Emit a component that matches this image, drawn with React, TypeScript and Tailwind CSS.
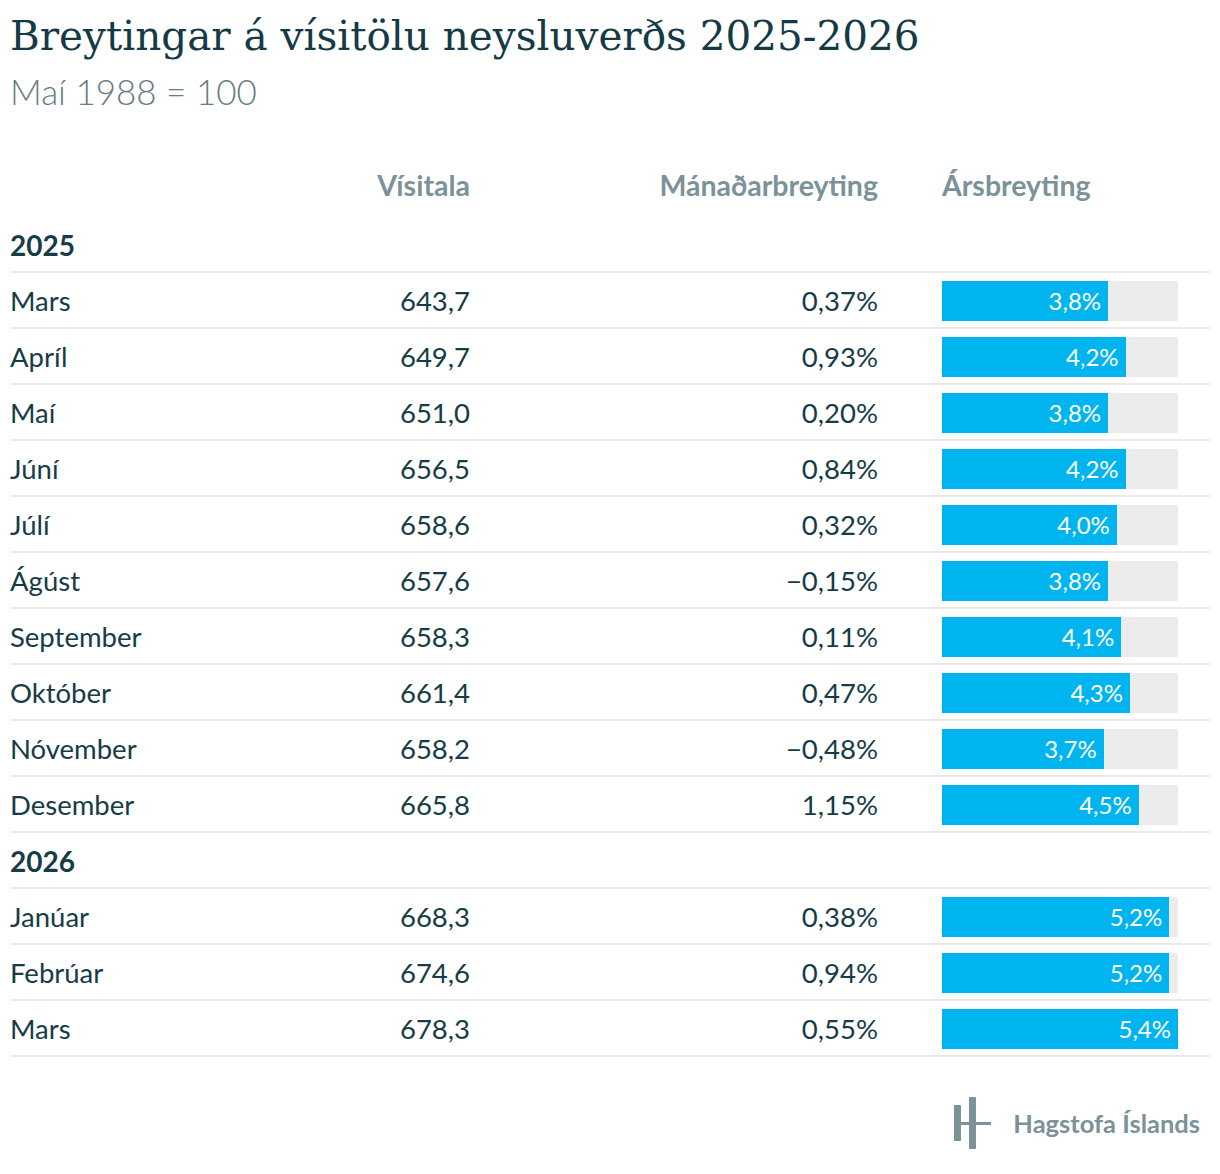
import React from "react";

type Row = { label: string; index: string; month: string; year: number };

const groups: { year: string; rows: Row[] }[] = [
  {
    year: "2025",
    rows: [
      { label: "Mars", index: "643,7", month: "0,37%", year: 3.8 },
      { label: "Apríl", index: "649,7", month: "0,93%", year: 4.2 },
      { label: "Maí", index: "651,0", month: "0,20%", year: 3.8 },
      { label: "Júní", index: "656,5", month: "0,84%", year: 4.2 },
      { label: "Júlí", index: "658,6", month: "0,32%", year: 4.0 },
      { label: "Ágúst", index: "657,6", month: "\u22120,15%", year: 3.8 },
      { label: "September", index: "658,3", month: "0,11%", year: 4.1 },
      { label: "Október", index: "661,4", month: "0,47%", year: 4.3 },
      { label: "Nóvember", index: "658,2", month: "\u22120,48%", year: 3.7 },
      { label: "Desember", index: "665,8", month: "1,15%", year: 4.5 },
    ],
  },
  {
    year: "2026",
    rows: [
      { label: "Janúar", index: "668,3", month: "0,38%", year: 5.2 },
      { label: "Febrúar", index: "674,6", month: "0,94%", year: 5.2 },
      { label: "Mars", index: "678,3", month: "0,55%", year: 5.4 },
    ],
  },
];

const MAX = 5.4;

function fmt(v: number) {
  return v.toFixed(1).replace(".", ",") + "%";
}

function Bar({ value }: { value: number }) {
  return (
    <div className="h-[40px] w-[236px] bg-[#ececec]">
      <div
        className="flex h-full items-center justify-end bg-[#00b5ef] pr-[7px] text-[24px] text-white"
        style={{ width: `${(value / MAX) * 100}%` }}
      >
        {fmt(value)}
      </div>
    </div>
  );
}

function Logo() {
  return (
    <div className="flex items-center gap-[21px]">
      <svg width="38" height="52" viewBox="0 0 38 52">
        <rect x="0" y="8" width="7" height="36" rx="1" fill="#7b9299" />
        <rect x="15" y="0" width="7" height="52" rx="1" fill="#7b9299" />
        <rect x="0" y="25" width="37" height="3" fill="#7b9299" />
      </svg>
      <span className="text-[25.5px] font-bold text-[#7b9299]">Hagstofa Íslands</span>
    </div>
  );
}

export default function App() {
  return (
    <div
      className="min-h-[1174px] w-[1220px] bg-white px-[10px] pt-[8px] text-[#163c47]"
      style={{ fontFamily: "Lato, 'Noto Sans', sans-serif" }}
    >
      <h1
        className="text-[40.5px] leading-[56px] text-[#143a45]"
        style={{ fontFamily: "'DejaVu Serif', 'Liberation Serif', serif" }}
      >
        Breytingar á vísitölu neysluverðs 2025-2026
      </h1>
      <div className="mt-[5px] text-[35px] font-light leading-[44px] text-[#687c83]">
        Maí 1988 = 100
      </div>

      <div className="flex h-[104px] items-end pb-[15px] text-[28.5px] font-bold leading-[34px] text-[#7b9299]">
        <div className="w-[260px]" />
        <div className="w-[200px] text-right">Vísitala</div>
        <div className="w-[408px] text-right">Mánaðarbreyting</div>
        <div className="ml-[64px]">Ársbreyting</div>
      </div>

      {groups.map((g) => (
        <div key={g.year}>
          <div className="flex h-[56px] items-center border-b-2 border-[#ebebeb] pt-[2px] text-[28px] font-bold">
            {g.year}
          </div>
          {g.rows.map((r, i) => (
            <div
              key={g.year + i}
              className="flex h-[56px] items-center border-b-2 border-[#ebebeb] pt-[2px] text-[27.5px]"
            >
              <div className="w-[260px]">{r.label}</div>
              <div className="w-[200px] text-right">{r.index}</div>
              <div className="w-[408px] text-right">{r.month}</div>
              <div className="ml-[64px]">
                <Bar value={r.year} />
              </div>
            </div>
          ))}
        </div>
      ))}

      <div className="mt-[40px] flex justify-end pr-[10px]">
        <Logo />
      </div>
    </div>
  );
}
